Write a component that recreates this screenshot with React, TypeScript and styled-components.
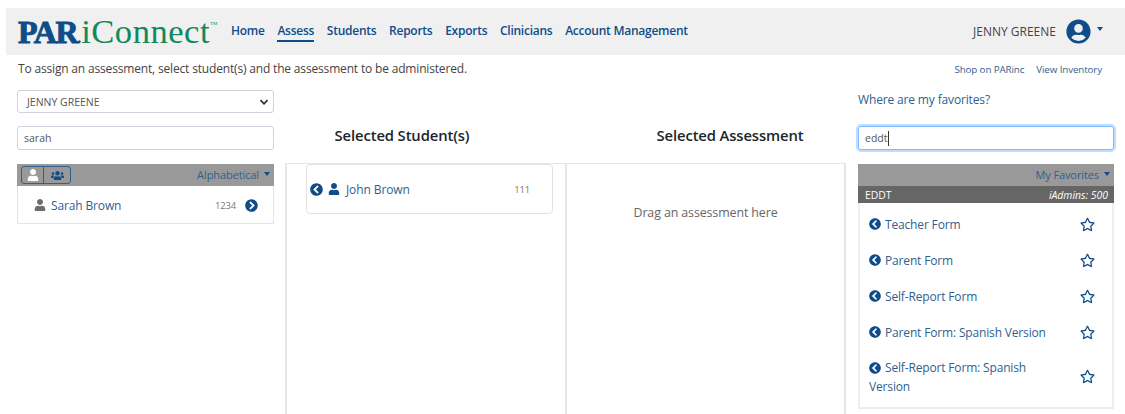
import React from 'react';
import styled, { createGlobalStyle } from 'styled-components';
import { FaChevronCircleLeft, FaChevronCircleRight, FaRegStar, FaUser, FaUserCircle, FaUsers } from 'react-icons/fa';

const GlobalStyle = createGlobalStyle`
  html, body {
    margin: 0;
    height: 414px;
    overflow: hidden;
    background: #fff;
    font-family: "Open Sans", "Noto Sans", sans-serif;
    color: #212529;
  }
  * { box-sizing: border-box; }
`;

const BLUE = '#0f4c8a';
const LINK = '#2f5f8f';

const Page = styled.div`
  padding: 8px 0 0 6px;
`;

const Header = styled.header`
  height: 47px;
  background: #f0f0f0;
  display: flex;
  align-items: center;
  padding: 0 22px 0 12px;
`;

const Logo = styled.div`
  display: flex;
  align-items: baseline;
  font-family: "Liberation Serif", serif;
  line-height: 1;
  width: 213px;
  flex: none;
`;

const LogoPar = styled.span`
  color: ${BLUE};
  font-weight: 700;
  font-size: 32px;
  letter-spacing: -1.4px;
  -webkit-text-stroke: 1px ${BLUE};
`;

const LogoDot = styled.span`
  color: ${BLUE};
  font-size: 16px;
  font-weight: 700;
`;

const LogoRest = styled.span`
  color: #12895c;
  font-size: 34.6px;
  letter-spacing: 0.5px;
`;

const LogoTm = styled.span`
  color: #12895c;
  font-size: 5px;
  line-height: 0;
  position: relative;
  top: -18px;
`;

const Nav = styled.nav`
  display: flex;
  gap: 12.7px;
`;

const NavLink = styled.a<{ $active?: boolean }>`
  color: ${BLUE};
  font-size: 12px;
  font-weight: 600;
  letter-spacing: -0.25px;
  padding-bottom: 1px;
  border-bottom: 2px solid ${p => (p.$active ? BLUE : 'transparent')};
`;

const UserMenu = styled.div`
  margin-left: auto;
  display: flex;
  align-items: center;
  font-size: 12px;
  color: #444;
  gap: 10px;
  svg { color: ${BLUE}; }
`;

const Caret = styled.span<{ $color?: string }>`
  display: inline-block;
  width: 0;
  height: 0;
  border-left: 3.5px solid transparent;
  border-right: 3.5px solid transparent;
  border-top: 4px solid ${p => p.$color || BLUE};
`;

const UserCaret = styled(Caret)`
  margin: 0 0 5px -4px;
`;

const Intro = styled.div`
  display: flex;
  justify-content: space-between;
  align-items: center;
  height: 27px;
  padding: 0 23px 0 12px;
  font-size: 12px;
  letter-spacing: -0.17px;
  color: #444;
`;

const SmallLinks = styled.div`
  display: flex;
  gap: 12px;
  padding-top: 1px;
  font-size: 9.8px;
  letter-spacing: -0.12px;
  color: ${LINK};
`;

const Board = styled.main`
  display: grid;
  grid-template-columns: 257px 12px 280px 280px 12px 256px;
  grid-template-rows: 23px 13px 24px 14px auto;
  margin: 8px 0 0 11px;
`;

const Field = styled.div<{ $col: number; $row: number }>`
  grid-column: ${p => p.$col};
  grid-row: ${p => p.$row};
`;

const SelectBox = styled.div`
  height: 23px;
  border: 1px solid #ced4da;
  border-radius: 3px;
  display: flex;
  align-items: center;
  justify-content: space-between;
  padding: 0 3px 0 9px;
  font-size: 10.5px;
  color: #555;
  svg { display: block; }
`;

const TextBox = styled.div<{ $focus?: boolean }>`
  height: 24px;
  border: 1px solid ${p => (p.$focus ? '#80bdff' : '#ced4da')};
  border-radius: 3px;
  display: flex;
  align-items: center;
  padding: 0 6px;
  font-size: 10.5px;
  color: #555;
  box-shadow: ${p => (p.$focus ? '0 0 0 2px rgba(0,123,255,.25)' : 'none')};
`;

const TextCursor = styled.span`
  display: inline-block;
  width: 1px;
  height: 15px;
  background: #333;
`;

const FavoritesLink = styled.a`
  display: block;
  font-size: 12px;
  letter-spacing: -0.15px;
  color: ${LINK};
  line-height: 19px;
`;

const Heading = styled.h2<{ $col: number; $shift: number }>`
  grid-column: ${p => p.$col};
  grid-row: 3;
  margin: -1px 0 0;
  font-size: 14.8px;
  font-weight: 600;
  letter-spacing: -0.12px;
  line-height: 20px;
  color: #212529;
  text-align: center;
  transform: translateX(${p => p.$shift}px);
`;

const ListBar = styled.div`
  height: 22px;
  background: #999;
  display: flex;
  align-items: center;
  justify-content: space-between;
  padding: 0 4px;
  font-size: 11px;
  color: ${LINK};
`;

const SortLabel = styled.span`
  display: flex;
  align-items: center;
  gap: 5px;
  margin-left: auto;
  padding-bottom: 2px;
  letter-spacing: -0.1px;
`;

const ToggleGroup = styled.div`
  display: flex;
  height: 18px;
  border: 1px solid ${LINK};
  border-radius: 3px;
  overflow: hidden;
`;

const ToggleButton = styled.span<{ $on?: boolean }>`
  width: 21px;
  display: flex;
  align-items: center;
  justify-content: center;
  font-size: 12px;
  color: ${p => (p.$on ? '#fff' : BLUE)};
  & + & { border-left: 1px solid ${LINK}; width: 27px; font-size: 13px; }
`;

const ListBody = styled.div`
  border: 1px solid #e4e4e4;
  border-top: 0;
`;

const StudentRow = styled.div`
  height: 37px;
  display: flex;
  align-items: center;
  padding: 1px 15px 0 16px;
  font-size: 12px;
  letter-spacing: -0.14px;
  color: ${LINK};
`;

const GreyIcon = styled.span`
  display: flex;
  color: #6c6c6c;
  font-size: 12px;
  margin-right: 5px;
`;

const Code = styled.span`
  margin-left: auto;
  font-size: 9.4px;
  color: #777;
`;

const ArrowIcon = styled.span`
  display: flex;
  color: ${BLUE};
  font-size: 13px;
`;

const StudentArrow = styled(ArrowIcon)`
  margin-left: 9px;
`;

const DropPanel = styled.section<{ $col: number; $closed?: boolean }>`
  grid-column: ${p => p.$col};
  grid-row: 5;
  height: 260px;
  margin: -1px 0 0 -1px;
  border-top: 1px solid #e6e6e6;
  border-left: 2px solid #e6e6e6;
  border-right: ${p => (p.$closed ? '2px solid #e6e6e6' : '0')};
`;

const StudentPanel = styled(DropPanel)`
  padding: 0 13px 0 19px;
`;

const SelectedCard = styled.div`
  height: 50px;
  border: 1px solid #e2e2e2;
  border-radius: 4px;
  display: flex;
  align-items: center;
  padding: 0 22px 0 3px;
  font-size: 12px;
  letter-spacing: -0.1px;
  color: ${LINK};
`;

const BlueUser = styled.span`
  display: flex;
  color: ${BLUE};
  font-size: 12px;
  margin: 0 6px 0 5px;
`;

const DragHint = styled.p`
  margin: 40px 0 0;
  font-size: 12.4px;
  letter-spacing: -0.1px;
  color: #666;
  text-align: center;
`;

const TitleBar = styled.div`
  height: 17px;
  background: #666;
  display: flex;
  align-items: center;
  justify-content: space-between;
  padding: 0 6px 0 7px;
  font-size: 10.4px;
  color: #fff;
`;

const Admins = styled.em`
  font-size: 10.4px;
`;

const FormList = styled.div`
  border: 2px solid #ededed;
  border-top: 0;
  padding: 4px 0 2px;
`;

const FormRow = styled.div`
  display: flex;
  align-items: center;
  justify-content: space-between;
  min-height: 36px;
  padding: 0 17px 0 9px;
  font-size: 12px;
  letter-spacing: -0.16px;
  line-height: 18.8px;
  color: ${LINK};
`;

const FormRowTall = styled(FormRow)`
  padding-top: 8px;
  padding-bottom: 8px;
`;

const FormName = styled.span`
  max-width: 195px;
`;

const FormArrow = styled(FaChevronCircleLeft)`
  color: ${BLUE};
  font-size: 12px;
  margin-right: 4px;
  vertical-align: -1.5px;
`;

const Star = styled(FaRegStar)`
  flex: none;
  color: ${BLUE};
  font-size: 15px;
  margin-bottom: 2px;
`;

const forms = [
  'Teacher Form',
  'Parent Form',
  'Self-Report Form',
  'Parent Form: Spanish Version',
];

const navItems = ['Home', 'Assess', 'Students', 'Reports', 'Exports', 'Clinicians', 'Account Management'];

export default function App() {
  return (
    <Page>
      <GlobalStyle />
      <Header>
        <Logo>
          <LogoPar>PAR</LogoPar>
          <LogoDot>.</LogoDot>
          <LogoRest>iConnect</LogoRest>
          <LogoTm>TM</LogoTm>
        </Logo>
        <Nav>
          {navItems.map(item => (
            <NavLink key={item} $active={item === 'Assess'}>{item}</NavLink>
          ))}
        </Nav>
        <UserMenu>
          JENNY GREENE
          <FaUserCircle size={25} />
          <UserCaret />
        </UserMenu>
      </Header>

      <Intro>
        <span>To assign an assessment, select student(s) and the assessment to be administered.</span>
        <SmallLinks>
          <span>Shop on PARinc</span>
          <span>View Inventory</span>
        </SmallLinks>
      </Intro>

      <Board>
        <Field $col={1} $row={1}>
          <SelectBox>
            JENNY GREENE
            <svg width="12" height="12" viewBox="0 0 12 12">
              <path d="M2.5 4.2 6 7.8l3.5-3.6" fill="none" stroke="#333" strokeWidth="1.8" />
            </svg>
          </SelectBox>
        </Field>
        <Field $col={6} $row={1}>
          <FavoritesLink>Where are my favorites?</FavoritesLink>
        </Field>

        <Field $col={1} $row={3}>
          <TextBox>sarah</TextBox>
        </Field>
        <Heading $col={3} $shift={-24}>Selected Student(s)</Heading>
        <Heading $col={4} $shift={24}>Selected Assessment</Heading>
        <Field $col={6} $row={3}>
          <TextBox $focus>eddt<TextCursor /></TextBox>
        </Field>

        <Field $col={1} $row={5}>
          <ListBar>
            <ToggleGroup>
              <ToggleButton $on><FaUser /></ToggleButton>
              <ToggleButton><FaUsers /></ToggleButton>
            </ToggleGroup>
            <SortLabel>Alphabetical <Caret /></SortLabel>
          </ListBar>
          <ListBody>
            <StudentRow>
              <GreyIcon><FaUser /></GreyIcon>
              Sarah Brown
              <Code>1234</Code>
              <StudentArrow><FaChevronCircleRight /></StudentArrow>
            </StudentRow>
          </ListBody>
        </Field>

        <StudentPanel $col={3}>
          <SelectedCard>
            <ArrowIcon><FaChevronCircleLeft /></ArrowIcon>
            <BlueUser><FaUser /></BlueUser>
            John Brown
            <Code>111</Code>
          </SelectedCard>
        </StudentPanel>

        <DropPanel $col={4} $closed>
          <DragHint>Drag an assessment here</DragHint>
        </DropPanel>

        <Field $col={6} $row={5}>
          <ListBar>
            <SortLabel>My Favorites <Caret /></SortLabel>
          </ListBar>
          <TitleBar>
            <span>EDDT</span>
            <Admins>iAdmins: 500</Admins>
          </TitleBar>
          <FormList>
            {forms.map(name => (
              <FormRow key={name}>
                <FormName><FormArrow />{name}</FormName>
                <Star />
              </FormRow>
            ))}
            <FormRowTall>
              <FormName><FormArrow />Self-Report Form: Spanish Version</FormName>
              <Star />
            </FormRowTall>
          </FormList>
        </Field>
      </Board>
    </Page>
  );
}
